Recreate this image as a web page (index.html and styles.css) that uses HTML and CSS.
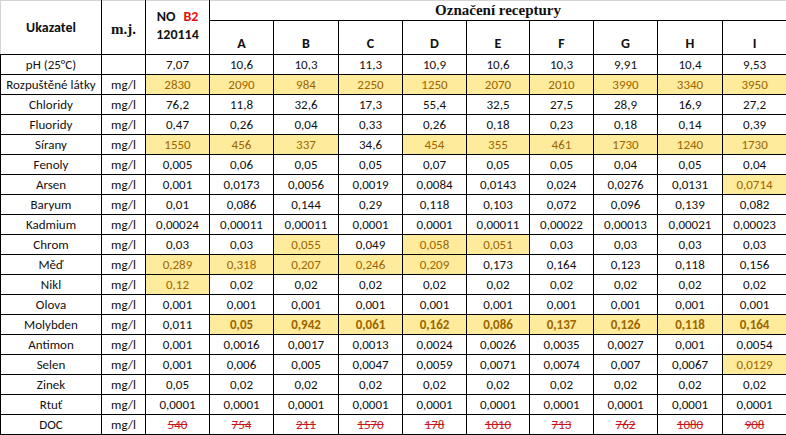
FILE: index.html
```html
<!DOCTYPE html>
<html lang="cs">
<head>
<meta charset="utf-8">
<title>Označení receptury</title>
<link rel="stylesheet" href="styles.css">
</head>
<body>
<table class="sheet">
  <colgroup>
    <col class="c-name"><col class="c-unit"><col class="c-no">
    <col class="c-v"><col class="c-v5"><col class="c-v"><col class="c-v"><col class="c-v3"><col class="c-v"><col class="c-v"><col class="c-v5"><col class="c-v">
  </colgroup>
  <thead>
    <tr class="h1">
      <th rowspan="2" class="hd-name">Ukazatel</th>
      <th rowspan="2" class="hd-unit">m.j.</th>
      <th rowspan="2" class="hd-no"><span class="no">NO</span><span class="b2">B2</span><br>120114</th>
      <th colspan="9" class="hd-group">Označení receptury</th>
    </tr>
    <tr class="h2">
      <th class="hd-l">A</th><th class="hd-l">B</th><th class="hd-l">C</th><th class="hd-l">D</th><th class="hd-l">E</th><th class="hd-l">F</th><th class="hd-l">G</th><th class="hd-l">H</th><th class="hd-l">I</th>
    </tr>
  </thead>
  <tbody>
    <tr><td>pH (25°C)</td><td></td><td>7,07</td><td>10,6</td><td>10,3</td><td>11,3</td><td>10,9</td><td>10,6</td><td>10,3</td><td>9,91</td><td>10,4</td><td>9,53</td></tr>
    <tr><td>Rozpuštěné látky</td><td>mg/l</td><td class="n">2830</td><td class="n">2090</td><td class="n">984</td><td class="n">2250</td><td class="n">1250</td><td class="n">2070</td><td class="n">2010</td><td class="n">3990</td><td class="n">3340</td><td class="n">3950</td></tr>
    <tr><td>Chloridy</td><td>mg/l</td><td>76,2</td><td>11,8</td><td>32,6</td><td>17,3</td><td>55,4</td><td>32,5</td><td>27,5</td><td>28,9</td><td>16,9</td><td>27,2</td></tr>
    <tr><td>Fluoridy</td><td>mg/l</td><td>0,47</td><td>0,26</td><td>0,04</td><td>0,33</td><td>0,26</td><td>0,18</td><td>0,23</td><td>0,18</td><td>0,14</td><td>0,39</td></tr>
    <tr><td>Sírany</td><td>mg/l</td><td class="n">1550</td><td class="n">456</td><td class="n">337</td><td>34,6</td><td class="n">454</td><td class="n">355</td><td class="n">461</td><td class="n">1730</td><td class="n">1240</td><td class="n">1730</td></tr>
    <tr><td>Fenoly</td><td>mg/l</td><td>0,005</td><td>0,06</td><td>0,05</td><td>0,05</td><td>0,07</td><td>0,05</td><td>0,05</td><td>0,04</td><td>0,05</td><td>0,04</td></tr>
    <tr><td>Arsen</td><td>mg/l</td><td>0,001</td><td>0,0173</td><td>0,0056</td><td>0,0019</td><td>0,0084</td><td>0,0143</td><td>0,024</td><td>0,0276</td><td>0,0131</td><td class="n">0,0714</td></tr>
    <tr><td>Baryum</td><td>mg/l</td><td>0,01</td><td>0,086</td><td>0,144</td><td>0,29</td><td>0,118</td><td>0,103</td><td>0,072</td><td>0,096</td><td>0,139</td><td>0,082</td></tr>
    <tr><td>Kadmium</td><td>mg/l</td><td>0,00024</td><td>0,00011</td><td>0,00011</td><td>0,0001</td><td>0,0001</td><td>0,00011</td><td>0,00022</td><td>0,00013</td><td>0,00021</td><td>0,00023</td></tr>
    <tr><td>Chrom</td><td>mg/l</td><td>0,03</td><td>0,03</td><td class="n">0,055</td><td>0,049</td><td class="n">0,058</td><td class="n">0,051</td><td>0,03</td><td>0,03</td><td>0,03</td><td>0,03</td></tr>
    <tr><td>Měď</td><td>mg/l</td><td class="n">0,289</td><td class="n">0,318</td><td class="n">0,207</td><td class="n">0,246</td><td class="n">0,209</td><td>0,173</td><td>0,164</td><td>0,123</td><td>0,118</td><td>0,156</td></tr>
    <tr><td>Nikl</td><td>mg/l</td><td class="n">0,12</td><td>0,02</td><td>0,02</td><td>0,02</td><td>0,02</td><td>0,02</td><td>0,02</td><td>0,02</td><td>0,02</td><td>0,02</td></tr>
    <tr><td>Olova</td><td>mg/l</td><td>0,001</td><td>0,001</td><td>0,001</td><td>0,001</td><td>0,001</td><td>0,001</td><td>0,001</td><td>0,001</td><td>0,001</td><td>0,001</td></tr>
    <tr><td>Molybden</td><td>mg/l</td><td>0,011</td><td class="n b">0,05</td><td class="n b">0,942</td><td class="n b">0,061</td><td class="n b">0,162</td><td class="n b">0,086</td><td class="n b">0,137</td><td class="n b">0,126</td><td class="n b">0,118</td><td class="n b">0,164</td></tr>
    <tr><td>Antimon</td><td>mg/l</td><td>0,001</td><td>0,0016</td><td>0,0017</td><td>0,0013</td><td>0,0024</td><td>0,0026</td><td>0,0035</td><td>0,0027</td><td>0,001</td><td>0,0054</td></tr>
    <tr><td>Selen</td><td>mg/l</td><td>0,001</td><td>0,006</td><td>0,005</td><td>0,0047</td><td>0,0059</td><td>0,0071</td><td>0,0074</td><td>0,007</td><td>0,0067</td><td class="n">0,0129</td></tr>
    <tr><td>Zinek</td><td>mg/l</td><td>0,05</td><td>0,02</td><td>0,02</td><td>0,02</td><td>0,02</td><td>0,02</td><td>0,02</td><td>0,02</td><td>0,02</td><td>0,02</td></tr>
    <tr><td>Rtuť</td><td>mg/l</td><td>0,0001</td><td>0,0001</td><td>0,0001</td><td>0,0001</td><td>0,0001</td><td>0,0001</td><td>0,0001</td><td>0,0001</td><td>0,0001</td><td>0,0001</td></tr>
    <tr class="doc"><td>DOC</td><td>mg/l</td><td><s>540</s></td><td><s>754</s></td><td><s>211</s></td><td><s>1570</s></td><td><s>178</s></td><td><s>1010</s></td><td><s>713</s></td><td><s>762</s></td><td><s>1080</s></td><td><s>908</s></td></tr>
  </tbody>
</table>
</body>
</html>
```

FILE: styles.css
```css
html, body {
  margin: 0;
  padding: 0;
  background: #ffffff;
}

.sheet {
  border-collapse: collapse;
  table-layout: fixed;
  width: 786px;
  font-family: "Carlito", "Lato", sans-serif;
  font-size: 13px;
  color: #111111;
}

.c-name { width: 101px; }
.c-unit { width: 44px; }
.c-no { width: 64px; }
.c-v { width: 64px; }
.c-v5 { width: 65px; }
.c-v3 { width: 63px; }

.sheet th,
.sheet td {
  border: 1px solid #000000;
  padding: 0;
  text-align: center;
  white-space: nowrap;
  overflow: hidden;
}

.sheet tbody tr {
  height: 20px;
}

.sheet td {
  line-height: 18px;
  vertical-align: middle;
}

.h1 { height: 20px; }
.h2 { height: 34px; }

.sheet thead th {
  font-weight: 700;
}

.hd-name {
  font-size: 14px;
  border-top-color: #d4d4d4 !important;
  border-left-color: #d4d4d4 !important;
  vertical-align: middle;
}

.hd-unit {
  font-family: "Liberation Serif", serif;
  font-size: 15px;
  border-top-color: #d4d4d4 !important;
  vertical-align: middle;
  padding-top: 4px !important;
}

.hd-no {
  font-size: 14px;
  line-height: 18px;
  vertical-align: top;
  padding-top: 7px !important;
  border-top-color: #d4d4d4 !important;
}

.hd-no .b2 {
  color: #e01010;
  margin-left: 8px;
}

.hd-group {
  font-family: "Liberation Serif", serif;
  font-size: 15px;
  border-top-color: #d4d4d4 !important;
  border-right-color: #d4d4d4 !important;
  vertical-align: middle;
}

.hd-l {
  font-size: 14px;
  vertical-align: bottom;
  padding-bottom: 2px !important;
}

.sheet td.n {
  background: #ffeb9c;
  color: #9c6500;
}

.sheet td.b {
  font-weight: 700;
}

.doc s {
  color: #c8161d;
  text-decoration-color: #c8161d;
}
```
